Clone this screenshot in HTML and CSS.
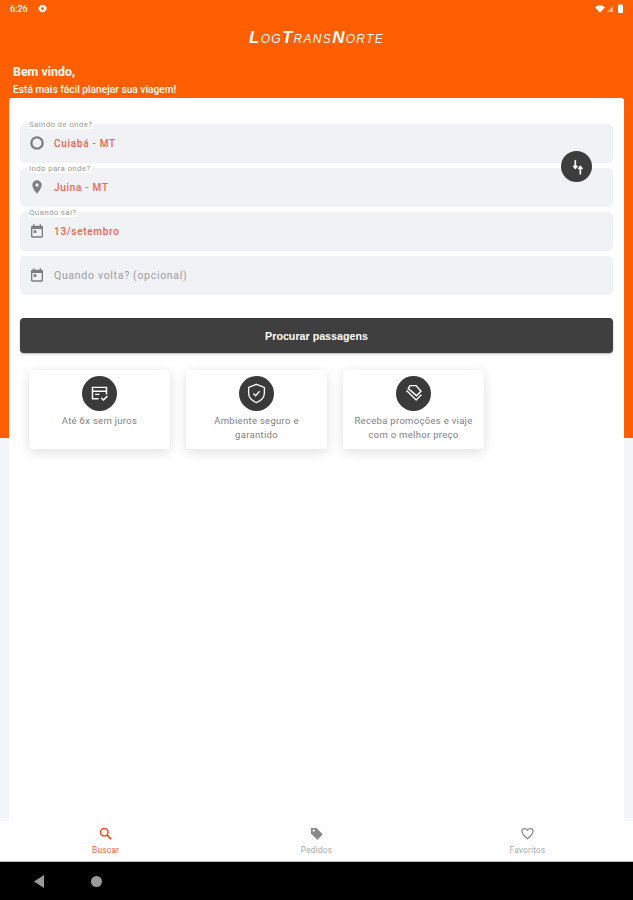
FILE: index.html
```html
<!DOCTYPE html>
<html lang="pt-BR">
<head>
    <meta charset="UTF-8">
    <meta name="viewport" content="width=device-width, initial-scale=1.0">
    <title>Log Trans Norte</title>
    <link rel="stylesheet" href="styles.css">
</head>
<body>
    <div class="app">
        <div class="status-bar">
            <span class="time">6:26</span>
            <svg class="gear" viewBox="0 0 24 24"><path fill="#fff" d="M12 1l2.500 3.200 4-.6 1.500 3.800 3.500 2-1.500 2.600 1.500 2.600-3.500 2-1.500 3.800-4-.6L12 23l-2.500-3.200-4 .6L4 16.600l-3.500-2L2 12 .5 9.400l3.500-2 1.500-3.800 4 .6z"/><circle cx="12" cy="12" r="4" fill="#ff5f00"/></svg>
            <span class="status-right">
                <svg class="wifi" viewBox="0 0 24 18"><path fill="#fff" d="M12 18L0 5c6.500-6.500 17.500-6.500 24 0z"/></svg>
                <svg class="signal" viewBox="0 0 12 12"><path fill="#ffb48a" d="M12 0v12H0z"/></svg>
                <svg class="battery" viewBox="0 0 8 14"><path fill="#fff" d="M2.500 0h3v1H7a1 1 0 0 1 1 1v11a1 1 0 0 1-1 1H1a1 1 0 0 1-1-1V2a1 1 0 0 1 1-1h1.500z"/></svg>
            </span>
        </div>

        <div class="logo"><b>L</b>og<b>T</b>rans<b>N</b>orte</div>

        <div class="welcome">
            <h1>Bem vindo,</h1>
            <p>Está mais fácil planejar sua viagem!</p>
        </div>

        <main class="panel">
            <form class="search">
                <div class="field">
                    <span class="field-label">Saindo de onde?</span>
                    <svg class="field-icon" viewBox="0 0 24 24"><circle cx="12" cy="12" r="8.500" fill="none" stroke="#7d7d7d" stroke-width="3.500"/></svg>
                    <span class="field-value">Cuiabá - MT</span>
                </div>
                <div class="field">
                    <span class="field-label">Indo para onde?</span>
                    <svg class="field-icon" viewBox="0 0 24 24"><path fill="#7d7d7d" d="M12 2a7 7 0 0 0-7 7c0 5.200 7 13 7 13s7-7.800 7-13a7 7 0 0 0-7-7zm0 9.500a2.500 2.500 0 1 1 0-5 2.500 2.500 0 0 1 0 5z"/></svg>
                    <span class="field-value">Juina - MT</span>
                </div>
                <div class="field">
                    <span class="field-label">Quando sai?</span>
                    <svg class="field-icon" viewBox="0 0 24 24"><path fill="#7d7d7d" d="M19 4h-1V2h-2v2H8V2H6v2H5a2 2 0 0 0-2 2v14a2 2 0 0 0 2 2h14a2 2 0 0 0 2-2V6a2 2 0 0 0-2-2zm0 16H5V9h14zM7 11h4v4H7z"/></svg>
                    <span class="field-value">13/setembro</span>
                </div>
                <div class="field">
                    <svg class="field-icon" viewBox="0 0 24 24"><path fill="#7d7d7d" d="M19 4h-1V2h-2v2H8V2H6v2H5a2 2 0 0 0-2 2v14a2 2 0 0 0 2 2h14a2 2 0 0 0 2-2V6a2 2 0 0 0-2-2zm0 16H5V9h14zM7 11h4v4H7z"/></svg>
                    <span class="field-placeholder">Quando volta? (opcional)</span>
                </div>

                <button type="button" class="swap">
                    <svg viewBox="0 0 24 24"><path fill="none" stroke="#fff" stroke-width="2" d="M10 4v9M7.500 10.500L10 13.500l2.500-3M16 21v-9M13.500 14.500L16 11.500l2.500 3"/></svg>
                </button>

                <button type="button" class="submit">Procurar passagens</button>
            </form>

            <div class="cards">
                <div class="card">
                    <span class="card-icon">
                        <svg viewBox="0 0 24 24"><path fill="none" stroke="#fff" stroke-width="1.700" d="M11 18H4V5h16v8M4 9.500h16M7 13h5"/><path fill="none" stroke="#fff" stroke-width="1.700" d="M14 17l2.500 2.500L21 15"/></svg>
                    </span>
                    <p>Até 6x sem juros</p>
                </div>
                <div class="card">
                    <span class="card-icon">
                        <svg viewBox="0 0 24 24"><path fill="none" stroke="#fff" stroke-width="1.500" d="M12 1.500l9 3.500v6.500c0 5.500-4 9-9 11-5-2-9-5.500-9-11V5z"/><path fill="none" stroke="#fff" stroke-width="1.500" d="M8.500 12l2.500 2.500 4.500-5"/></svg>
                    </span>
                    <p>Ambiente seguro e garantido</p>
                </div>
                <div class="card">
                    <span class="card-icon">
                        <svg viewBox="0 0 24 24"><path fill="none" stroke="#fff" stroke-width="1.700" d="M8 3h7l5.500 6.500-5 5L6 6.500z"/><path fill="none" stroke="#fff" stroke-width="1.700" d="M4 8.500l11 11 6-6"/></svg>
                    </span>
                    <p>Receba promoções e viaje com o melhor preço</p>
                </div>
            </div>
        </main>

        <nav class="tabs">
            <div class="tab tab-active">
                <svg viewBox="0 0 24 24"><circle cx="10" cy="10" r="6" fill="none" stroke="#f4511e" stroke-width="2.500"/><path stroke="#f4511e" stroke-width="3" d="M14.500 14.500L21 21"/></svg>
                <span>Buscar</span>
            </div>
            <div class="tab">
                <svg viewBox="0 0 24 24"><path fill="#8a8a8a" d="M3 3h9l10 10-8.500 9L3 12zm4.500 6a1.800 1.800 0 1 0 0-3.600 1.800 1.800 0 0 0 0 3.600z"/></svg>
                <span>Pedidos</span>
            </div>
            <div class="tab">
                <svg viewBox="0 0 24 24"><path fill="none" stroke="#8a8a8a" stroke-width="2" d="M12 20.500C5 14.500 3 12 3 8.500 3 5.500 5.300 4 7.500 4c2 0 3.500 1 4.500 2.500C13 5 14.500 4 16.500 4 18.700 4 21 5.500 21 8.500c0 3.500-2 6-9 12z"/></svg>
                <span>Favoritos</span>
            </div>
        </nav>

        <div class="nav-bar">
            <svg class="nav-back" viewBox="0 0 12 14"><path fill="#9a9a9a" d="M11 0v14L0 7z"/></svg>
            <span class="nav-home"></span>
        </div>
    </div>
</body>
</html>
```

FILE: styles.css
```css
* {
    box-sizing: border-box;
}
body {
    margin: 0;
    font-family: Roboto, "Liberation Sans", sans-serif;
}
.app {
    position: relative;
    display: flex;
    flex-direction: column;
    width: 633px;
    height: 900px;
    overflow: hidden;
    background: linear-gradient(#ff5f00 438px, #f3f5f8 438px);
}

/* status bar */
.status-bar {
    display: flex;
    align-items: center;
    height: 17px;
    padding: 0 10px;
    color: #fff;
}
.time {
    font-size: 9px;
    font-weight: 500;
}
.gear {
    width: 9px;
    height: 9px;
    margin-left: 10px;
}
.status-right {
    display: flex;
    align-items: center;
    gap: 2px;
    margin-left: auto;
}
.wifi {
    width: 10px;
    height: 8px;
}
.signal {
    width: 6px;
    height: 6px;
    margin-right: 3px;
}
.battery {
    width: 5px;
    height: 9px;
}

/* logo */
.logo {
    height: 22px;
    margin-top: 10px;
    line-height: 22px;
    text-align: center;
    font-family: "Liberation Sans", sans-serif;
    font-style: italic;
    font-size: 12px;
    letter-spacing: 1.3px;
    text-transform: uppercase;
    color: #fff;
}
.logo b {
    font-size: 17px;
    font-weight: 700;
}

.welcome {
    height: 49px;
    padding: 0 13px;
    color: #fff;
}
.welcome h1 {
    margin: 0;
    padding-top: 15px;
    font-size: 12.400px;
    line-height: 16px;
    font-weight: 700;
}
.welcome p {
    margin: 2px 0 0;
    font-size: 10.200px;
    line-height: 15px;
    font-weight: 500;
}

/* main panel */
.panel {
    flex: 1;
    margin: 0 9px;
    padding: 26px 11px 0;
    background: #fff;
    border-radius: 3px 3px 0 0;
}
.search {
    position: relative;
    display: flex;
    flex-direction: column;
    gap: 5px;
}
.field {
    position: relative;
    display: flex;
    align-items: center;
    height: 39px;
    padding: 0 0 1px 9px;
    background: #f1f2f6;
    border-radius: 5px;
}
.field-label {
    position: absolute;
    top: -4px;
    left: 8px;
    padding: 0 1px;
    font-size: 8px;
    line-height: 9px;
    letter-spacing: 0.3px;
    color: #9a9a9a;
    background: #fff;
}
.field-icon {
    width: 16px;
    height: 16px;
    flex: none;
}
.field-value {
    margin-left: 9px;
    font-size: 10px;
    font-weight: 500;
    letter-spacing: 0.7px;
    color: #f2644a;
}
.field-placeholder {
    margin-left: 9px;
    font-size: 10.500px;
    letter-spacing: 0.7px;
    color: #9b9b9b;
}
.swap {
    position: absolute;
    top: 27px;
    right: 21px;
    display: flex;
    align-items: center;
    justify-content: center;
    width: 31px;
    height: 31px;
    padding: 0;
    background: #3d3d3d;
    border: none;
    border-radius: 50%;
}
.swap svg {
    width: 20px;
    height: 20px;
}
.submit {
    height: 35px;
    margin-top: 18px;
    padding: 0;
    font-family: "Liberation Sans", sans-serif;
    font-size: 10.700px;
    font-weight: 700;
    color: #fff;
    background: #3f3f3f;
    border: none;
    border-radius: 4px;
    box-shadow: 0 1px 2px rgba(0, 0, 0, 0.3);
}

/* info cards */
.cards {
    display: flex;
    gap: 16px;
    margin: 17px 0 0 9px;
}
.card {
    display: flex;
    flex-direction: column;
    align-items: center;
    width: 141px;
    height: 79px;
    padding-top: 6px;
    background: #fff;
    border-radius: 3px;
    box-shadow: 0 3px 12px rgba(0, 0, 0, 0.13);
}
.card-icon {
    display: flex;
    align-items: center;
    justify-content: center;
    width: 35px;
    height: 35px;
    background: #3a3a3a;
    border-radius: 50%;
}
.card-icon svg {
    width: 21px;
    height: 21px;
}
.card p {
    margin: 3px 0 0;
    padding: 0 8px;
    text-align: center;
    font-size: 9.500px;
    line-height: 14px;
    letter-spacing: 0.3px;
    color: #808080;
}

/* bottom tabs */
.tabs {
    display: flex;
    height: 41px;
    background: #fff;
    border-bottom: 1px solid #bbb;
}
.tab {
    flex: 1;
    display: flex;
    flex-direction: column;
    align-items: center;
    padding-top: 5px;
    font-size: 8.300px;
    letter-spacing: 0.2px;
    color: #aaa;
}
.tab svg {
    width: 15px;
    height: 15px;
    margin-bottom: 4px;
}
.tab-active {
    color: #f4603f;
}

/* android nav */
.nav-bar {
    display: flex;
    align-items: center;
    height: 38px;
    padding-left: 34px;
    background: #000;
}
.nav-back {
    width: 11px;
    height: 13px;
}
.nav-home {
    width: 11px;
    height: 11px;
    margin-left: 46px;
    background: #9a9a9a;
    border-radius: 50%;
}
```
